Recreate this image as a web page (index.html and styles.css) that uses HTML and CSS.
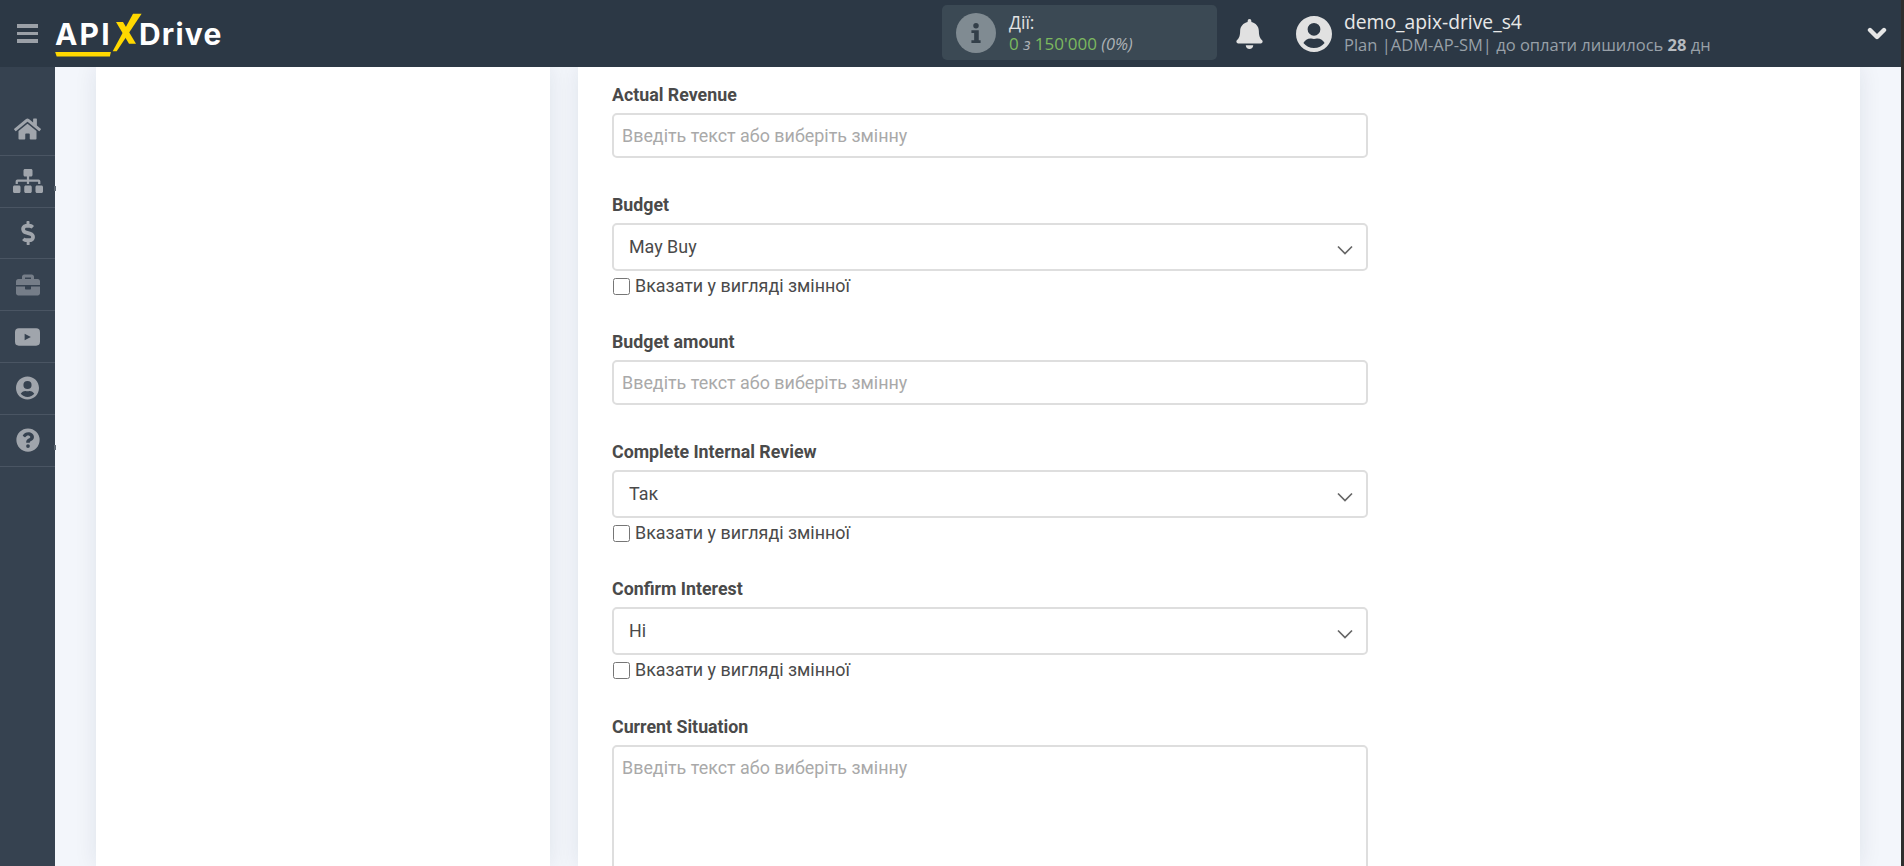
FILE: index.html
```html
<!DOCTYPE html>
<html lang="uk">
<head>
<meta charset="utf-8">
<title>ApiX-Drive</title>
<link rel="stylesheet" href="styles.css">
</head>
<body>
<div class="app">
  <header class="topbar">
    <div class="burger"><span></span><span></span><span></span></div>
    <div class="logo">
      <span class="logo-api">API</span>
      <svg class="logo-x" viewBox="0 0 30 39" aria-hidden="true"><polygon fill="#ffd800" points="29.6,0.7 21,0.7 0.7,38.3 4.7,38.3"/><polygon fill="#ffd800" points="4,9 11,9 24,30.7 17,30.7"/></svg>
      <span class="logo-drive">Drive</span>
      <i class="logo-line"></i>
    </div>
    <div class="actions">
      <div class="actions-icon">
        <svg viewBox="0 0 12 24" width="12" height="22" aria-hidden="true"><circle cx="6" cy="4" r="3" fill="#333f49"/><path fill="#333f49" d="M1 9h8v11h2v3H1v-3h3v-8H1z"/></svg>
      </div>
      <div class="actions-text">
        <div class="actions-title">Дії:</div>
        <div class="actions-count">0 <em>з</em> 150'000 <em>(0%)</em></div>
      </div>
    </div>
    <svg class="bell" viewBox="0 0 448 512" aria-hidden="true"><path fill="#e1e1e1" d="M224 512c35 0 64-29 64-64H160c0 35 29 64 64 64zm215-150c-19-21-55-52-55-154 0-78-54-140-128-155V32a32 32 0 0 0-64 0v21C118 68 64 130 64 208c0 102-36 133-55 154-6 6-9 14-9 22 0 16 13 32 32 32h384c19 0 32-16 32-32 0-8-3-16-9-22z"/></svg>
    <svg class="avatar" viewBox="0 0 496 512" aria-hidden="true"><path fill="#e1e1e1" d="M248 8C111 8 0 119 0 256s111 248 248 248 248-111 248-248S385 8 248 8zm0 96a88 88 0 1 1 0 176 88 88 0 0 1 0-176zm0 344c-59 0-111-27-146-69 19-36 56-61 99-61 2 0 5 0 7 1 13 4 27 7 40 7s27-3 40-7c2-1 5-1 7-1 43 0 80 25 99 61-35 42-87 69-146 69z"/></svg>
    <div class="account">
      <div class="account-name">demo_apix-drive_s4</div>
      <div class="account-plan">Plan |ADM-AP-SM| до оплати лишилось <b>28</b> дн</div>
    </div>
    <svg class="account-caret" viewBox="0 0 20 14" aria-hidden="true"><path fill="none" stroke="#e6e6e6" stroke-width="4.4" stroke-linecap="round" stroke-linejoin="round" d="M3 3l7 7 7-7"/></svg>
  </header>
  <div class="body-row">
    <nav class="sidebar">
      <a class="nav-item">
        <svg viewBox="0 0 576 512" width="27" height="24" aria-hidden="true"><path fill="#a0a5ac" d="M280 148 96 300v164c0 9 7 16 16 16l112-1c9 0 16-7 16-16v-95c0-9 7-16 16-16h64c9 0 16 7 16 16v95c0 9 7 16 16 16l112 1c9 0 16-7 16-16V300L296 148a12 12 0 0 0-16 0zm291 103-83-69V44c0-7-5-12-12-12h-56c-7 0-12 5-12 12v73l-90-74a48 48 0 0 0-61 0L5 251c-5 4-6 12-2 17l26 31c4 5 12 6 17 2L280 107a12 12 0 0 1 16 0l234 194c5 4 13 3 17-2l26-31c4-5 3-13-2-17z"/></svg>
      </a>
      <a class="nav-item nav-item-notch">
        <svg viewBox="0 0 640 512" width="30" height="24" aria-hidden="true"><path fill="#a0a5ac" d="M128 352H32c-18 0-32 14-32 32v96c0 18 14 32 32 32h96c18 0 32-14 32-32v-96c0-18-14-32-32-32zm-24-80h192v48h48v-48h192v48h48v-57c0-21-17-39-39-39H344v-64h40c18 0 32-14 32-32V32c0-18-14-32-32-32H256c-18 0-32 14-32 32v96c0 18 14 32 32 32h40v64H95c-21 0-39 18-39 39v57h48zm264 80h-96c-18 0-32 14-32 32v96c0 18 14 32 32 32h96c18 0 32-14 32-32v-96c0-18-14-32-32-32zm240 0h-96c-18 0-32 14-32 32v96c0 18 14 32 32 32h96c18 0 32-14 32-32v-96c0-18-14-32-32-32z"/></svg>
      </a>
      <a class="nav-item">
        <svg viewBox="0 0 288 512" width="14" height="24" aria-hidden="true"><path fill="#a0a5ac" d="M209 233l-108-31c-12-4-21-15-21-28 0-16 13-29 29-29h66c12 0 24 4 34 10 6 4 14 3 19-2l35-34c7-7 6-18-2-24-24-19-54-30-85-30V16c0-9-7-16-16-16h-32c-9 0-16 7-16 16v48h-3C45 64-7 119 1 185c5 47 41 85 86 98l103 30c12 4 21 15 21 28 0 16-13 29-29 29h-66c-12 0-24-4-34-10-6-4-14-3-19 2l-35 34c-7 7-6 18 2 24 24 19 54 30 85 30v48c0 9 7 16 16 16h32c9 0 16-7 16-16v-48c47-1 90-29 106-73 22-62-14-125-78-144z"/></svg>
      </a>
      <a class="nav-item">
        <svg viewBox="0 0 512 512" width="24" height="24" aria-hidden="true"><path fill="#757d88" d="M320 336c0 9-7 16-16 16h-96c-9 0-16-7-16-16v-48H0v144c0 26 22 48 48 48h416c26 0 48-22 48-48V288H320v48zm144-208h-80V80c0-26-22-48-48-48H176c-26 0-48 22-48 48v48H48c-26 0-48 22-48 48v80h512v-80c0-26-22-48-48-48zm-144 0H192V96h128v32z"/></svg>
      </a>
      <a class="nav-item">
        <svg viewBox="0 0 26 18" width="25" height="18" aria-hidden="true"><rect width="26" height="18" rx="4" fill="#a0a5ac"/><path fill="#364250" d="M10 5.5l6.5 3.5-6.5 3.5z"/></svg>
      </a>
      <a class="nav-item">
        <svg viewBox="0 0 496 512" width="23" height="24" aria-hidden="true"><path fill="#a0a5ac" d="M248 8C111 8 0 119 0 256s111 248 248 248 248-111 248-248S385 8 248 8zm0 96a88 88 0 1 1 0 176 88 88 0 0 1 0-176zm0 344c-59 0-111-27-146-69 19-36 56-61 99-61 2 0 5 0 7 1 13 4 27 7 40 7s27-3 40-7c2-1 5-1 7-1 43 0 80 25 99 61-35 42-87 69-146 69z"/></svg>
      </a>
      <a class="nav-item nav-item-notch">
        <svg viewBox="0 0 512 512" width="24" height="24" aria-hidden="true"><path fill="#a0a5ac" d="M504 256a248 248 0 1 1-496 0 248 248 0 0 1 496 0zM263 90c-55 0-89 23-116 64-4 5-3 12 3 16l35 26c5 4 13 3 17-2 18-23 30-36 57-36 21 0 46 13 46 33 0 15-12 23-33 34-23 14-55 31-55 73v4c0 7 5 12 12 12h56c7 0 12-5 12-12v-1c0-30 86-31 86-110 0-60-62-101-120-101zm-7 254a40 40 0 1 0 0 80 40 40 0 0 0 0-80z"/></svg>
      </a>
    </nav>
    <main class="page">
      <aside class="card card-side"></aside>
      <section class="card card-form">
        <div class="field">
          <label class="field-label">Actual Revenue</label>
          <input class="control control-input" type="text" placeholder="Введіть текст або виберіть змінну">
        </div>
        <div class="field">
          <label class="field-label">Budget</label>
          <div class="select-wrap">
            <select class="control control-select"><option>May Buy</option></select>
            <svg class="select-caret" viewBox="0 0 16 10" aria-hidden="true"><path fill="none" stroke="#666" stroke-width="1.7" d="M1 1.5l7 7 7-7"/></svg>
          </div>
          <label class="check"><input type="checkbox"><span>Вказати у вигляді змінної</span></label>
        </div>
        <div class="field">
          <label class="field-label">Budget amount</label>
          <input class="control control-input" type="text" placeholder="Введіть текст або виберіть змінну">
        </div>
        <div class="field">
          <label class="field-label">Complete Internal Review</label>
          <div class="select-wrap">
            <select class="control control-select"><option>Так</option></select>
            <svg class="select-caret" viewBox="0 0 16 10" aria-hidden="true"><path fill="none" stroke="#666" stroke-width="1.7" d="M1 1.5l7 7 7-7"/></svg>
          </div>
          <label class="check"><input type="checkbox"><span>Вказати у вигляді змінної</span></label>
        </div>
        <div class="field">
          <label class="field-label">Confirm Interest</label>
          <div class="select-wrap">
            <select class="control control-select"><option>Ні</option></select>
            <svg class="select-caret" viewBox="0 0 16 10" aria-hidden="true"><path fill="none" stroke="#666" stroke-width="1.7" d="M1 1.5l7 7 7-7"/></svg>
          </div>
          <label class="check"><input type="checkbox"><span>Вказати у вигляді змінної</span></label>
        </div>
        <div class="field field-last">
          <label class="field-label">Current Situation</label>
          <textarea class="control control-area" placeholder="Введіть текст або виберіть змінну"></textarea>
        </div>
      </section>
    </main>
  </div>
</div>
<div class="scrollbar"></div>
</body>
</html>
```
FILE: styles.css
```css
* { box-sizing: border-box; }
html, body { height: 100%; }
body {
  margin: 0;
  display: flex;
  height: 866px;
  overflow: hidden;
  font-family: "Roboto", "Liberation Sans", sans-serif;
  background: #f3f6fb;
}
.app { flex: 1; min-width: 0; display: flex; flex-direction: column; }
.scrollbar { width: 3px; background: #2e2e2e; }

/* top bar */
.topbar {
  height: 67px;
  flex: none;
  background: #2c3845;
  display: flex;
  align-items: center;
  font-family: "Open Sans", "Liberation Sans", sans-serif;
  padding-left: 17px;
}
.burger { width: 21px; display: flex; flex-direction: column; gap: 4px; }
.burger span { display: block; height: 3.4px; background: #9ba0a7; }
.logo {
  position: relative;
  margin-left: 17px;
  width: 167px;
  height: 40px;
  display: flex;
  align-items: center;
  color: #fff;
  font-family: "Inter", "Lato", sans-serif;
  font-weight: 700;
  font-size: 30px;
  line-height: 40px;
}
.logo-api { letter-spacing: 2.2px; width: 57px; flex: none; }
.logo-x { width: 30px; height: 39px; flex: none; margin-top: -2px; }
.logo-drive { margin-left: -3px; letter-spacing: 1.2px; }
.logo-line {
  position: absolute;
  left: 0;
  bottom: -3px;
  width: 56px;
  height: 5px;
  background: #ffd800;
  clip-path: polygon(0 0, 100% 0, 98% 100%, 3% 100%);
}
.actions {
  margin-left: 720px;
  margin-bottom: 2px;
  width: 275px;
  height: 55px;
  background: #3b4954;
  border-radius: 5px;
  display: flex;
  align-items: center;
  padding-left: 14px;
  gap: 13px;
}
.actions-icon {
  width: 40px;
  height: 40px;
  border-radius: 50%;
  background: #808b92;
  display: flex;
  align-items: center;
  justify-content: center;
}
.actions-text { margin-top: -1px; }
.actions-title { font-size: 17.5px; line-height: 22px; color: #e3e3e3; }
.actions-count { font-size: 17px; line-height: 21px; color: #7cb95f; }
.actions-count em { color: #adb2b6; font-size: 16.4px; }
.bell { width: 27px; height: 30px; margin-left: 19px; }
.avatar { width: 36px; height: 38px; margin-left: 33px; }
.account { margin-left: 12px; width: 502px; }
.account-name { font-size: 19.3px; line-height: 22px; color: #e8e8e8; }
.account-plan { font-size: 16.5px; line-height: 23px; color: #98a0a8; white-space: nowrap; }
.account-plan b { font-weight: 700; color: #b6bbc0; }
.account-caret { width: 20px; height: 14px; margin-left: 21px; }

/* layout below the bar */
.body-row { flex: 1; min-height: 0; display: flex; }
.sidebar {
  width: 55px;
  flex: none;
  background: #364250;
  padding-top: 37px;
}
.nav-item {
  position: relative;
  display: flex;
  align-items: center;
  justify-content: center;
  height: 51.8px;
  border-bottom: 1px solid #4a5563;
}
.nav-item-notch::after {
  content: "";
  position: absolute;
  left: 54px;
  top: 30px;
  width: 2px;
  height: 5px;
  background: #5d6772;
}
.page {
  flex: 1;
  min-width: 0;
  display: flex;
  gap: 28px;
  padding: 0 41px;
  overflow: hidden;
}
.card {
  background: #fff;
  box-shadow: 0 0 22px rgba(20, 30, 70, 0.09);
}
.card-side { width: 454px; flex: none; }
.card-form { flex: 1; min-width: 0; padding: 18px 34px 0; }

/* form */
.field { width: 756px; margin-bottom: 37px; }
.field-last { padding-top: 1px; }
.field-label {
  display: block;
  font-size: 17.8px;
  line-height: 20px;
  font-weight: 700;
  color: #4a4a4a;
  margin-bottom: 8px;
}
.control {
  display: block;
  width: 100%;
  border: 2px solid #dedede;
  border-radius: 5px;
  background: #fff;
  font-family: inherit;
  font-size: 17.9px;
  color: #4a4a4a;
  outline: none;
}
.control::placeholder { color: #a9a9a9; opacity: 1; }
.control-input { height: 45px; padding: 0 8px; }
.control-select { height: 48px; padding: 0 15px 2px; appearance: none; -webkit-appearance: none; }
.control-area { height: 300px; padding: 10px 8px; resize: none; }
.select-wrap { position: relative; }
.select-caret {
  position: absolute;
  right: 15px;
  top: 22px;
  width: 16px;
  height: 10px;
}
.check {
  display: flex;
  align-items: center;
  gap: 5px;
  height: 20px;
  margin-top: 5px;
  margin-bottom: -1px;
  font-size: 17.9px;
  font-weight: 400;
  line-height: 20px;
  color: #4a4a4a;
}
.check input { width: 17px; height: 17px; margin: 0 0 0 1px; }
```
